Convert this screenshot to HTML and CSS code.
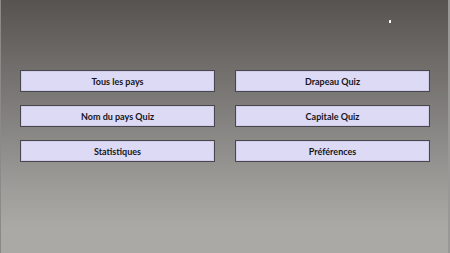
FILE: index.html
```html
<!DOCTYPE html>
<html>
<head>
    <meta charset="utf-8">
    <link rel="stylesheet" href="styles.css">
</head>
<body>
    <div class="fenetre">
        <div class="menu">
            <button class="choix">Tous les pays</button>
            <button class="choix">Drapeau Quiz</button>
            <button class="choix">Nom du pays Quiz</button>
            <button class="choix">Capitale Quiz</button>
            <button class="choix">Statistiques</button>
            <button class="choix">Préférences</button>
        </div>
        <span class="curseur"></span>
    </div>
</body>
</html>
```
FILE: styles.css
```css
/* Fenêtre principale */
html, body {
  margin: 0;
  height: 100%;
}

body {
  font-family: Lato, "Open Sans", sans-serif;
}

.fenetre {
  position: relative;
  box-sizing: border-box;
  height: 253px;
  width: 450px;
  padding: 70px 20px 0 20px;
  background: linear-gradient(to bottom, #575351 0%, #6e6b69 24%, #9e9d9a 75%, #aaa9a6 90%, #aaa9a6 100%);
  border-left: 1px solid #8c8a88;
  border-right: 2px solid #9a9896;
}

/* Grille des boutons */
.menu {
  display: grid;
  grid-template-columns: 195px 195px;
  column-gap: 20px;
  row-gap: 13px;
  margin-left: -1px;
}

.choix {
  height: 22px;
  margin: 0;
  padding: 0;
  background-color: #dcdaf4;
  border: 1px solid #4a4650;
  box-shadow: inset 0 0 0 1px #cfcce8;
  color: #16151b;
  font-family: inherit;
  font-size: 9px;
  font-weight: 700;
  cursor: pointer;
}

/* Pointeur de souris */
.curseur {
  position: absolute;
  left: 388px;
  top: 20px;
  width: 2px;
  height: 3px;
  background-color: #fff;
  border-top-left-radius: 1px;
}
```
